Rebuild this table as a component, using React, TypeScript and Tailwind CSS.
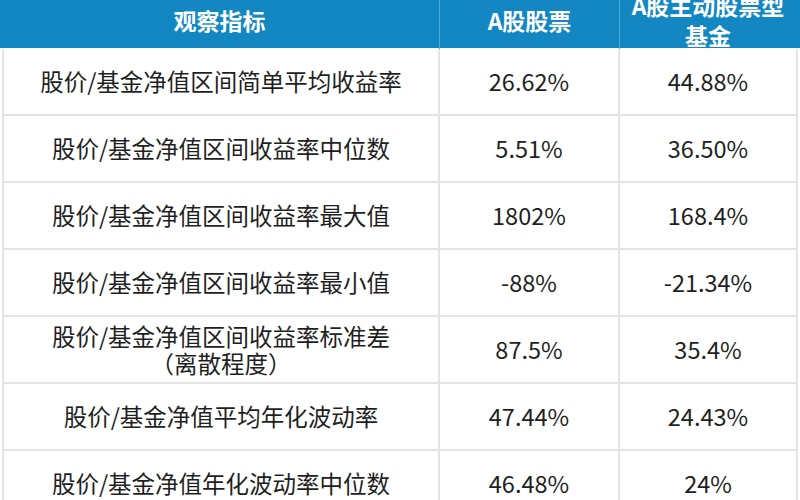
const rows = [
  { label: ['股价/基金净值区间简单平均收益率'], a: '26.62%', b: '44.88%' },
  { label: ['股价/基金净值区间收益率中位数'], a: '5.51%', b: '36.50%' },
  { label: ['股价/基金净值区间收益率最大值'], a: '1802%', b: '168.4%' },
  { label: ['股价/基金净值区间收益率最小值'], a: '-88%', b: '-21.34%' },
  { label: ['股价/基金净值区间收益率标准差', '（离散程度）'], a: '87.5%', b: '35.4%' },
  { label: ['股价/基金净值平均年化波动率'], a: '47.44%', b: '24.43%' },
  { label: ['股价/基金净值年化波动率中位数'], a: '46.48%', b: '24%' },
];

function App() {
  return (
    <div
      className="h-[500px] w-[800px] overflow-hidden bg-white text-[#1f1f1f]"
      style={{ fontFamily: '"Noto Sans CJK SC", "Noto Sans", sans-serif' }}
    >
      {/* header, top part cut off */}
      <div className="-mt-[12px] grid h-[60px] grid-cols-[440px_180px_176px] bg-[#1287c2] text-[23px] font-bold leading-[30px] text-white">
        <div className="flex items-center justify-center border-r border-[#4ea9d8] pt-[2px]">观察指标</div>
        <div className="flex items-center justify-center border-r border-[#4ea9d8] pt-[2px]">A股股票</div>
        <div className="flex flex-col items-center justify-center pt-[2px]">
          <span>A股主动股票型</span>
          <span>基金</span>
        </div>
      </div>

      {/* body */}
      <div className="mx-[2px] mt-[1px] border-x-2 border-[#e4e4e4]">
        {rows.map((r, i) => (
          <div
            key={i}
            className="grid h-[67px] grid-cols-[436px_180px_1fr] border-b-2 border-[#e4e4e4] text-[23.5px]"
          >
            <div className="flex flex-col items-center justify-center border-r-2 border-[#e4e4e4] leading-[27px]">
              {r.label.map((l, j) => (
                <span key={j}>{l}</span>
              ))}
            </div>
            <div className="flex items-center justify-center border-r-2 border-[#e4e4e4]">{r.a}</div>
            <div className="flex items-center justify-center">{r.b}</div>
          </div>
        ))}
      </div>
    </div>
  );
}

export default App;
